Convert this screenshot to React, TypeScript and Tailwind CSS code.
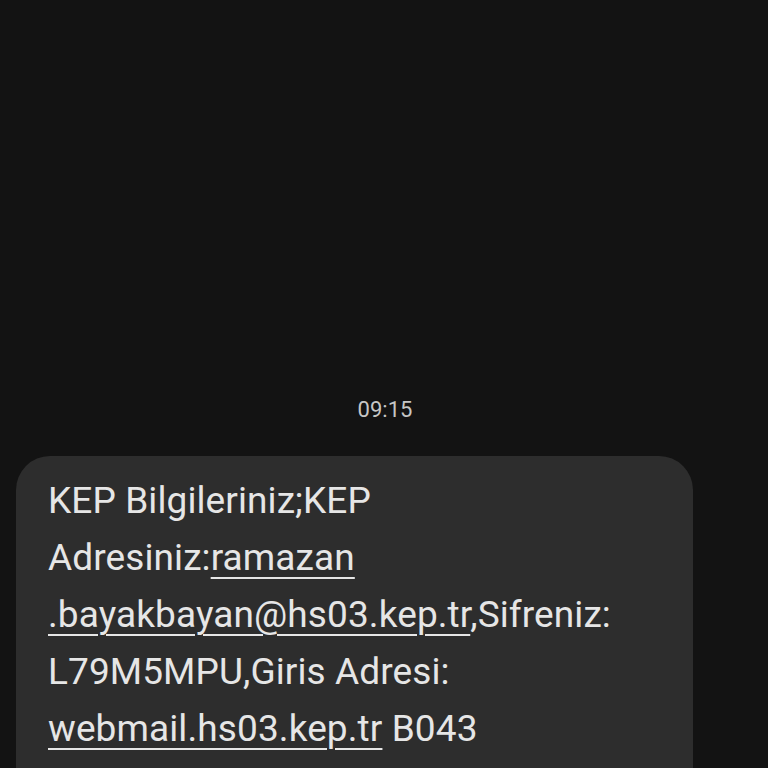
import React from 'react'

const Link = ({ children }: { children: React.ReactNode }) => (
  <span className="underline decoration-2 underline-offset-[7px]">{children}</span>
)

export default function App() {
  return (
    <div
      className="w-[768px] h-[768px] overflow-hidden bg-[#131313] flex flex-col"
      style={{ fontFamily: 'Roboto, "Noto Sans", sans-serif' }}
    >
      {/* Timestamp */}
      <div className="pt-[396px] text-center text-[22px] leading-[28px] text-[#c6c6c6] pl-[2px]">
        09:15
      </div>

      {/* Incoming message bubble */}
      <div className="mt-[32px] ml-4 w-[677px] rounded-t-[34px] bg-[#2d2d2d] pl-8 pr-6 pt-[16px] pb-10 text-[37px] leading-[57px] tracking-[0.1px] text-[#e6e6e6]">
        <div>KEP Bilgileriniz;KEP</div>
        <div>
          Adresiniz:<Link>ramazan</Link>
        </div>
        <div>
          <Link>.bayakbayan@hs03.kep.tr</Link>,Sifreniz:
        </div>
        <div>L79M5MPU,Giris Adresi:</div>
        <div>
          <Link>webmail.hs03.kep.tr</Link> B043
        </div>
      </div>
    </div>
  )
}
